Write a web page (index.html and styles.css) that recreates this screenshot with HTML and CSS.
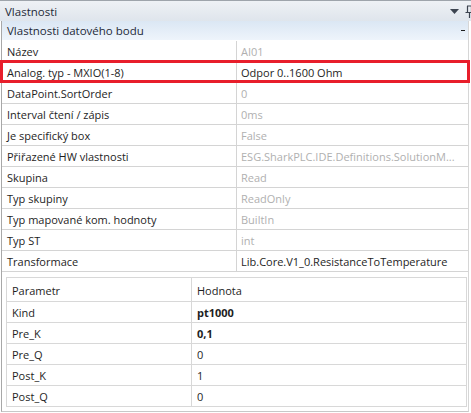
FILE: index.html
```html
<!DOCTYPE html>
<html lang="cs">
<head>
  <meta charset="UTF-8">
  <title>Vlastnosti</title>
  <link rel="stylesheet" href="styles.css">
</head>
<body>
  <div class="panel">
    <!-- Title bar -->
    <div class="titlebar">
      <span>Vlastnosti</span>
      <span class="tools">
        <svg class="drop" width="9" height="5" viewBox="0 0 9 5"><path d="M0 0h9L4.5 5z" fill="#3c4450"/></svg>
        <svg class="pin" width="9" height="13" viewBox="0 0 9 13"><path d="M2 1h5M2.5 1v6M6.5 1v6M0.5 7.5h8M4.5 8v5" stroke="#3c4450" stroke-width="1.2" fill="none"/></svg>
      </span>
    </div>

    <div class="grid">
      <div class="category">
        <span>Vlastnosti datového bodu</span>
        <span class="collapse"></span>
      </div>

      <div class="row"><div class="name">Název</div><div class="value dim">AI01</div></div>
      <div class="row selected"><div class="name">Analog. typ - MXIO(1-8)</div><div class="value">Odpor 0..1600 Ohm</div></div>
      <div class="row"><div class="name">DataPoint.SortOrder</div><div class="value dim">0</div></div>
      <div class="row"><div class="name">Interval čtení / zápis</div><div class="value dim">0ms</div></div>
      <div class="row"><div class="name">Je specifický box</div><div class="value dim">False</div></div>
      <div class="row"><div class="name">Přiřazené HW vlastnosti</div><div class="value dim">ESG.SharkPLC.IDE.Definitions.SolutionM...</div></div>
      <div class="row"><div class="name">Skupina</div><div class="value dim">Read</div></div>
      <div class="row"><div class="name">Typ skupiny</div><div class="value dim">ReadOnly</div></div>
      <div class="row"><div class="name">Typ mapované kom. hodnoty</div><div class="value dim">BuiltIn</div></div>
      <div class="row"><div class="name">Typ ST</div><div class="value dim">int</div></div>
      <div class="row"><div class="name">Transformace</div><div class="value">Lib.Core.V1_0.ResistanceToTemperature</div></div>

      <!-- Transformation parameters -->
      <div class="editor">
        <table class="params">
          <tr class="head"><td>Parametr</td><td>Hodnota</td></tr>
          <tr><td>Kind</td><td class="bold">pt1000</td></tr>
          <tr><td>Pre_K</td><td class="bold">0,1</td></tr>
          <tr><td>Pre_Q</td><td>0</td></tr>
          <tr><td>Post_K</td><td>1</td></tr>
          <tr><td>Post_Q</td><td>0</td></tr>
        </table>
      </div>
    </div>
  </div>
</body>
</html>
```

FILE: styles.css
```css
body {
  margin: 0;
  background-color: #ffffff;
  font-family: 'Open Sans', 'Noto Sans', sans-serif;
  font-size: 11px;
  color: #1e1e1e;
}
.panel {
  width: 471px;
  height: 413px;
  overflow: hidden;
}
.titlebar {
  height: 20px;
  border-top: 1px solid #9ea4ab;
  background: linear-gradient(#eef1f5, #dfe5ec);
  display: flex;
  align-items: center;
  justify-content: space-between;
  padding-left: 5px;
  color: #1e2a38;
  font-size: 11.5px;
}
.tools {
  display: flex;
  align-items: center;
  gap: 6px;
  margin-right: -3px;
}
.grid {
  margin-left: 1px;
  border-left: 1px solid #a8a8a8;
  border-right: 1px solid #d6d6d6;
  width: 466px;
  height: 390px;
  border-bottom: 1px solid #c8c8c8;
}
.category {
  height: 19px;
  background: linear-gradient(#dbe7f4, #eef4fb);
  border-bottom: 1px solid #ffffff;
  display: flex;
  align-items: center;
  justify-content: space-between;
  padding-left: 5px;
  color: #1e2a38;
  font-size: 11.5px;
}
.collapse {
  width: 4px;
  height: 1px;
  background: #1e1e1e;
  margin-right: 3px;
}
.row {
  display: flex;
  height: 20px;
  border-bottom: 1px solid #d4d4d4;
  position: relative;
}
.row .name {
  width: 229px;
  padding-left: 5px;
  border-right: 1px solid #d4d4d4;
  display: flex;
  align-items: center;
  white-space: nowrap;
}
.row .value {
  flex: 1;
  padding-left: 4px;
  display: flex;
  align-items: center;
  white-space: nowrap;
  overflow: hidden;
}
.dim {
  color: #b0b0b0;
}
.selected::after {
  content: "";
  position: absolute;
  left: -2px;
  top: -2px;
  right: -2px;
  bottom: -1px;
  border: 3px solid #e81e2b;
}
.editor {
  padding: 5px 0 0 4px;
}
.params {
  width: 461px;
  border-collapse: collapse;
  border: 1px solid #d8d8d8;
}
.params td {
  height: 20px;
  padding: 0 0 0 5px;
  border-bottom: 1px solid #d8d8d8;
  white-space: nowrap;
}
.params td:first-child {
  width: 179px;
  border-right: 1px solid #d8d8d8;
}
.params .head td {
  height: 22px;
  padding-top: 1px;
}
.bold {
  font-weight: bold;
}
```
